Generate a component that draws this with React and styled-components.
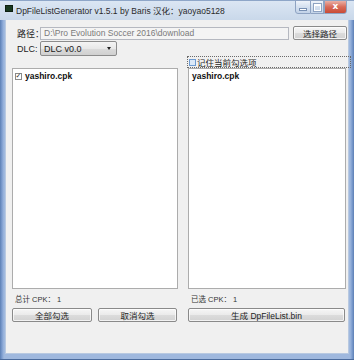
import styled, { createGlobalStyle } from "styled-components";

const FONT = `"Liberation Sans", "Noto Sans CJK SC", sans-serif`;

const GlobalStyle = createGlobalStyle`
  html, body {
    margin: 0;
    padding: 0;
    background: #ffffff;
  }
  body {
    font-family: ${FONT};
    font-size: 8.5px;
    color: #1a1a1a;
  }
`;

function App() {
  return (
    <>
      <GlobalStyle />
      <Window>
        <TitleBar>
          <AppIcon />
          <Title>DpFileListGenerator v1.5.1 by Baris 汉化：yaoyao5128</Title>
          <Captions>
            <CaptionButton $w={16}>
              <MinGlyph />
            </CaptionButton>
            <CaptionButton $w={13}>
              <MaxGlyph />
            </CaptionButton>
            <CaptionButton $w={23} $close>
              <CloseGlyph>x</CloseGlyph>
            </CaptionButton>
          </Captions>
        </TitleBar>

        <Client>
          <FieldRow>
            <Label>路径：</Label>
            <PathInput>D:\Pro Evolution Soccer 2016\download</PathInput>
            <Button $w={54}>选择路径</Button>
          </FieldRow>

          <FieldRow $dlc>
            <Label>DLC:</Label>
            <Select>
              <span>DLC v0.0</span>
              <Arrow />
            </Select>
          </FieldRow>

          <Columns>
            <Column>
              <Spacer />
              <ListBox>
                <Item>
                  <CheckBox $checked>✓</CheckBox>
                  yashiro.cpk
                </Item>
              </ListBox>
              <Status>总计 CPK： 1</Status>
              <ButtonRow>
                <Button $w={80}>全部勾选</Button>
                <Button $w={79}>取消勾选</Button>
              </ButtonRow>
            </Column>

            <Column>
              <Remember>
                <CheckBox $blue />
                记住当前勾选项
              </Remember>
              <ListBox>
                <Item $plain>yashiro.cpk</Item>
              </ListBox>
              <Status>已选 CPK： 1</Status>
              <ButtonRow>
                <Button $w={157}>生成 DpFileList.bin</Button>
              </ButtonRow>
            </Column>
          </Columns>
        </Client>
      </Window>
    </>
  );
}

const Window = styled.div`
  width: 354px;
  height: 360px;
  box-sizing: border-box;
  display: flex;
  flex-direction: column;
  padding: 0 5px 6px 5px;
  background: linear-gradient(90deg, #5c7fb4 0px, #7d9dcf 2px, #9fb8de 4px, #9fb8de 350px, #7d9dcf 352px, #5c7fb4 354px);
  box-shadow: inset 0 -1px 0 #4a6a9c;
`;

const TitleBar = styled.div`
  height: 20px;
  margin: 0 -5px;
  padding: 0 5px;
  display: flex;
  align-items: flex-start;
  background: linear-gradient(180deg, #dbe6f3 0%, #c9d8ea 100%);
  border-top: 1px solid #8ea6c8;
  box-sizing: border-box;
`;

const AppIcon = styled.div`
  width: 6px;
  height: 5px;
  margin-top: 4px;
  background: #17381f;
  border: 1px solid #0d1f10;
`;

const Title = styled.div`
  margin: 3px 0 0 3px;
  font-size: 8.5px;
  color: #2a2a2a;
  white-space: nowrap;
`;

const Captions = styled.div`
  margin-left: auto;
  margin-right: 2px;
  margin-top: -1px;
  display: flex;
`;

const CaptionButton = styled.div`
  width: ${(p) => p.$w}px;
  height: 14px;
  display: flex;
  align-items: center;
  justify-content: center;
  border: 1px solid #8ea3c2;
  border-left-width: ${(p) => (p.$close ? 1 : 0)}px;
  border-radius: 0 0 ${(p) => (p.$close ? "3px 0" : "0 0")};
  background: ${(p) =>
    p.$close
      ? "linear-gradient(180deg, #eab0a6 0%, #d86a58 50%, #c94b36 100%)"
      : "linear-gradient(180deg, #eef3fa 0%, #d4e0ef 50%, #c3d3e8 100%)"};
  box-sizing: border-box;
  &:first-child {
    border-left-width: 1px;
    border-radius: 0 0 0 3px;
  }
`;

const MinGlyph = styled.div`
  width: 6px;
  height: 1px;
  margin-top: 5px;
  background: #ffffff;
  border: 1px solid #7890b3;
`;

const MaxGlyph = styled.div`
  width: 5px;
  height: 4px;
  border: 1px solid #ffffff;
  border-top-width: 2px;
  outline: 1px solid #8ea3c2;
`;

const CloseGlyph = styled.span`
  font-family: "DejaVu Sans", sans-serif;
  font-weight: bold;
  font-size: 9px;
  color: #ffffff;
  line-height: 1;
  margin-top: -2px;
`;

const Client = styled.div`
  flex: 1;
  background: #f0f0f0;
  border: 1px solid #b8c9e1;
  border-top: none;
  padding: 6px 1px 0 5px;
  display: flex;
  flex-direction: column;
`;

const FieldRow = styled.div`
  display: flex;
  align-items: center;
  height: ${(p) => (p.$dlc ? 15 : 14)}px;
  margin-top: ${(p) => (p.$dlc ? 1 : 0)}px;
`;

const Label = styled.div`
  width: 23px;
  margin-left: 6px;
  font-size: 9px;
  color: #1e1e1e;
  white-space: nowrap;
`;

const PathInput = styled.div`
  width: 249px;
  height: 13px;
  box-sizing: border-box;
  border: 1px solid #b5b8c0;
  background: #f4f4f4;
  color: #7a7a7a;
  padding-left: 3px;
  line-height: 11px;
  white-space: nowrap;
  overflow: hidden;
`;

const Button = styled.div`
  width: ${(p) => p.$w}px;
  height: 14px;
  box-sizing: border-box;
  margin-left: auto;
  display: flex;
  align-items: center;
  justify-content: center;
  border: 1px solid #8a8a8a;
  border-radius: 2px;
  background: linear-gradient(180deg, #f6f6f6 0%, #ebebeb 48%, #dcdcdc 52%, #d2d2d2 100%);
  box-shadow: inset 0 0 0 1px rgba(255, 255, 255, 0.7);
  font-size: 8.5px;
  color: #1e1e1e;
  white-space: nowrap;
`;

const Select = styled.div`
  width: 77px;
  height: 15px;
  box-sizing: border-box;
  display: flex;
  align-items: center;
  justify-content: space-between;
  padding: 0 5px 0 3px;
  border: 1px solid #8c8c8c;
  border-radius: 2px;
  background: linear-gradient(180deg, #f4f4f4 0%, #e8e8e8 50%, #dbdbdb 51%, #d0d0d0 100%);
  font-size: 9px;
  color: #1a1a1a;
`;

const Arrow = styled.div`
  width: 0;
  height: 0;
  border-left: 2px solid transparent;
  border-right: 2px solid transparent;
  border-top: 3px solid #222;
`;

const Columns = styled.div`
  flex: 1;
  display: grid;
  grid-template-columns: 166px 158px;
  column-gap: 10px;
  padding-left: 1px;
`;

const Column = styled.div`
  display: flex;
  flex-direction: column;
`;

const Spacer = styled.div`
  height: 12px;
`;

const Remember = styled.div`
  height: 12px;
  box-sizing: border-box;
  display: flex;
  align-items: center;
  gap: 1px;
  margin-left: -1px;
  width: 164px;
  border: 1px dotted #6a6a6a;
  padding-left: 1px;
  font-size: 8.5px;
  color: #1e1e1e;
`;

const ListBox = styled.div`
  height: 221px;
  box-sizing: border-box;
  background: #ffffff;
  border: 1px solid #acacac;
  padding: 2px 2px;
`;

const Item = styled.div`
  display: flex;
  align-items: center;
  gap: 3px;
  height: 10px;
  font-weight: bold;
  font-size: 8.5px;
  color: #111;
  padding-left: ${(p) => (p.$plain ? 1 : 0)}px;
`;

const CheckBox = styled.div`
  width: 7px;
  height: 7px;
  flex: none;
  box-sizing: border-box;
  display: flex;
  align-items: center;
  justify-content: center;
  border: 1px solid ${(p) => (p.$blue ? "#6e9bd1" : "#8a8a8a")};
  background: ${(p) => (p.$blue ? "#dbe9f8" : "#ffffff")};
  font-family: "DejaVu Sans", sans-serif;
  font-size: 7px;
  font-weight: normal;
  line-height: 1;
  color: #333;
`;

const Status = styled.div`
  height: 19px;
  display: flex;
  align-items: center;
  padding-left: 3px;
  font-size: 7.5px;
  color: #333;
`;

const ButtonRow = styled.div`
  display: flex;
  gap: 6px;
  & > * {
    margin-left: 0;
  }
`;

export default App;
